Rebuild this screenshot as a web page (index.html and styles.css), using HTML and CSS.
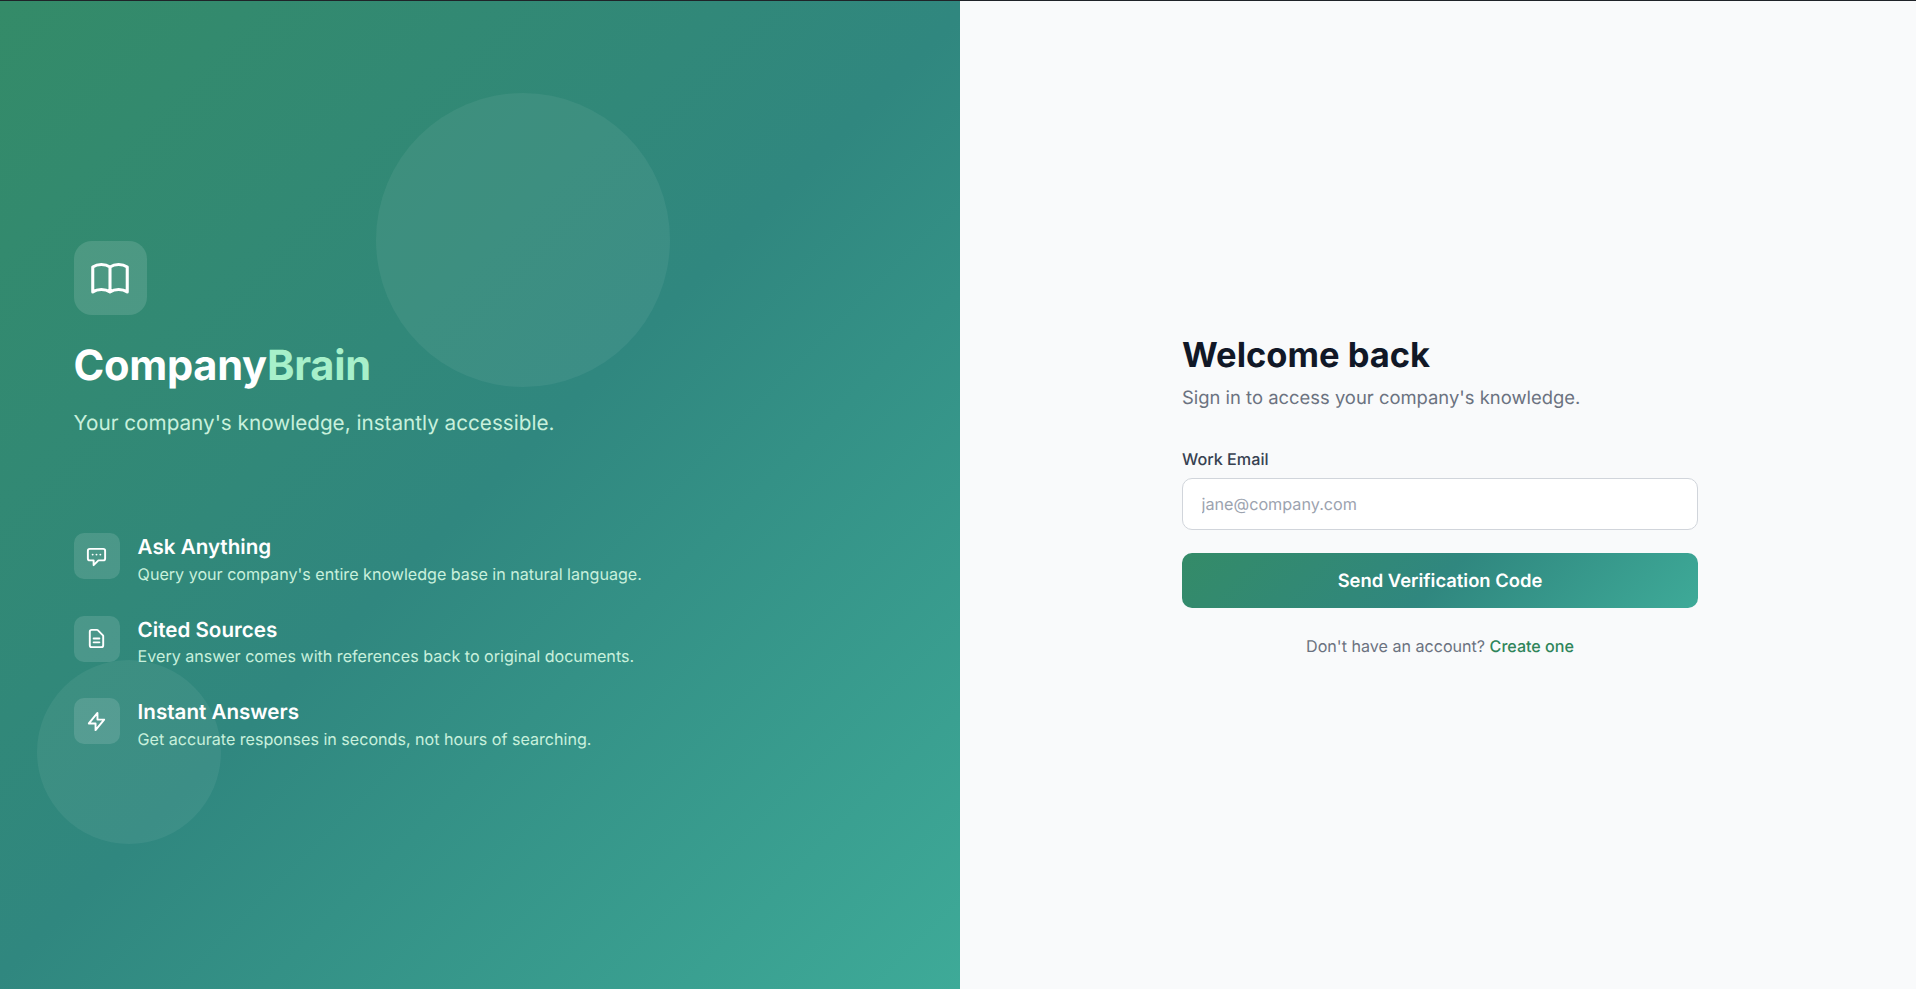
FILE: index.html
```html
<!DOCTYPE html>
<html lang="en">
<head>
<meta charset="utf-8">
<title>CompanyBrain</title>
<link rel="stylesheet" href="styles.css">
</head>
<body>
<main class="page">
  <section class="hero">
    <div class="circle circle-large"></div>
    <div class="circle circle-small"></div>
    <div class="hero-content">
      <div class="logo">
        <svg width="46" height="46" viewBox="0 0 24 24" fill="none" stroke="#fff" stroke-width="1.6" stroke-linecap="round" stroke-linejoin="round"><path d="M12 6.253v13m0-13C10.832 5.477 9.246 5 7.5 5S4.168 5.477 3 6.253v13C4.168 18.477 5.754 18 7.5 18s3.332.477 4.5 1.253m0-13C13.168 5.477 14.754 5 16.5 5c1.747 0 3.332.477 4.5 1.253v13C19.832 18.477 18.247 18 16.5 18c-1.746 0-3.332.477-4.5 1.253"/></svg>
      </div>
      <h1 class="brand">Company<span class="brand-accent">Brain</span></h1>
      <p class="tagline">Your company's knowledge, instantly accessible.</p>
      <ul class="features">
        <li class="feature">
          <div class="feature-icon">
            <svg width="23" height="23" viewBox="0 0 24 24" fill="none" stroke="#fff" stroke-width="2" stroke-linecap="round" stroke-linejoin="round"><path d="M8 10h.01M12 10h.01M16 10h.01M9 16H5a2 2 0 0 1-2-2V6a2 2 0 0 1 2-2h14a2 2 0 0 1 2 2v8a2 2 0 0 1-2 2h-5l-5 5v-5z"/></svg>
          </div>
          <div class="feature-body">
            <h2 class="feature-title">Ask Anything</h2>
            <p class="feature-text">Query your company's entire knowledge base in natural language.</p>
          </div>
        </li>
        <li class="feature">
          <div class="feature-icon">
            <svg width="23" height="23" viewBox="0 0 24 24" fill="none" stroke="#fff" stroke-width="2" stroke-linecap="round" stroke-linejoin="round"><path d="M9 12h6m-6 4h6m2 5H7a2 2 0 0 1-2-2V5a2 2 0 0 1 2-2h5.586a1 1 0 0 1 .707.293l5.414 5.414a1 1 0 0 1 .293.707V19a2 2 0 0 1-2 2z"/></svg>
          </div>
          <div class="feature-body">
            <h2 class="feature-title">Cited Sources</h2>
            <p class="feature-text">Every answer comes with references back to original documents.</p>
          </div>
        </li>
        <li class="feature">
          <div class="feature-icon">
            <svg width="23" height="23" viewBox="0 0 24 24" fill="none" stroke="#fff" stroke-width="2" stroke-linecap="round" stroke-linejoin="round"><path d="M13 10V3L4 14h7v7l9-11h-7z"/></svg>
          </div>
          <div class="feature-body">
            <h2 class="feature-title">Instant Answers</h2>
            <p class="feature-text">Get accurate responses in seconds, not hours of searching.</p>
          </div>
        </li>
      </ul>
    </div>
  </section>
  <section class="panel">
    <form class="card">
      <h2 class="welcome">Welcome back</h2>
      <p class="subtitle">Sign in to access your company's knowledge.</p>
      <label class="label" for="email">Work Email</label>
      <input class="input" id="email" type="email" placeholder="jane@company.com">
      <button class="submit" type="button">Send Verification Code</button>
      <p class="signup">Don't have an account? <a class="signup-link" href="#">Create one</a></p>
    </form>
  </section>
</main>
</body>
</html>
```

FILE: styles.css
```css
* { box-sizing: border-box; }
html, body { height: 100%; }
body {
  margin: 0;
  border-top: 1px solid #1f2328;
  font-family: Inter, "Liberation Sans", sans-serif;
  text-rendering: geometricPrecision;
  overflow: hidden;
}
.page { display: flex; height: 100%; }
.hero {
  position: relative;
  width: 960px;
  overflow: hidden;
  display: flex;
  flex-direction: column;
  justify-content: center;
  padding: 1px 73.6px 0;
  background: linear-gradient(135deg, #348b68 0%, #30877f 50%, #3eaa98 100%);
  color: #fff;
}
.circle { position: absolute; border-radius: 50%; background: rgba(255,255,255,.06); }
.circle-large { left: 376px; top: 92px; width: 294px; height: 294px; }
.circle-small { left: 37px; top: 659px; width: 184px; height: 184px; }
.hero-content { position: relative; }
.logo {
  width: 73.6px; height: 74px;
  border-radius: 18px;
  background: rgba(255,255,255,.13);
  display: flex; align-items: center; justify-content: center;
  margin-bottom: 26px;
}
.brand { margin: 0 0 17px; font-size: 41.6px; line-height: 50px; font-weight: 700; letter-spacing: -0.28px; }
.brand-accent { color: #a7f0ca; }
.tagline { margin: 0 0 95px; font-size: 20.7px; line-height: 30px; color: #c8f0dc; }
.features { list-style: none; margin: 0; padding: 0; display: flex; flex-direction: column; gap: 31px; }
.feature { display: flex; gap: 18px; align-items: flex-start; }
.feature-icon {
  width: 46px; height: 46px; flex: none;
  border-radius: 10px;
  background: rgba(255,255,255,.13);
  display: flex; align-items: center; justify-content: center;
}
.feature-body { padding-top: 1px; }
.feature-title { margin: 0 0 2.5px; font-size: 20.6px; line-height: 26px; font-weight: 600; }
.feature-text { margin: 0; font-size: 16.1px; line-height: 22px; color: #c8f0dc; }
.panel {
  flex: 1;
  padding-left: 4px;
  background: #f9fafb;
  display: flex; align-items: center; justify-content: center;
}
.card { width: 516px; display: flex; flex-direction: column; }
.welcome { margin: 0 0 7px; font-size: 34.5px; line-height: 45px; font-weight: 700; color: #111827; }
.subtitle { margin: 0 0 37px; font-size: 18.42px; line-height: 26px; color: #6b7280; }
.label { margin-bottom: 8px; font-size: 16.2px; line-height: 22px; font-weight: 500; color: #374151; }
.input {
  height: 52px;
  padding: 0 18.5px;
  border: 1px solid #d1d5db;
  border-radius: 10px;
  background: #fff;
  font: 400 16.2px Inter, sans-serif;
  text-rendering: geometricPrecision;
  margin-bottom: 23px;
}
.input::placeholder { color: #9ca3af; }
.submit {
  height: 55px;
  padding-top: 2px;
  border: 0;
  border-radius: 10px;
  background: linear-gradient(135deg, #348b68 0%, #30877f 50%, #3eaa98 100%);
  color: #fff;
  font: 600 18.4px Inter, sans-serif;
  text-rendering: geometricPrecision;
  margin-bottom: 26px;
}
.signup { margin: 0; text-align: center; font-size: 16.1px; line-height: 24px; color: #6b7280; }
.signup-link { color: #2f855a; font-weight: 500; text-decoration: none; }
```
